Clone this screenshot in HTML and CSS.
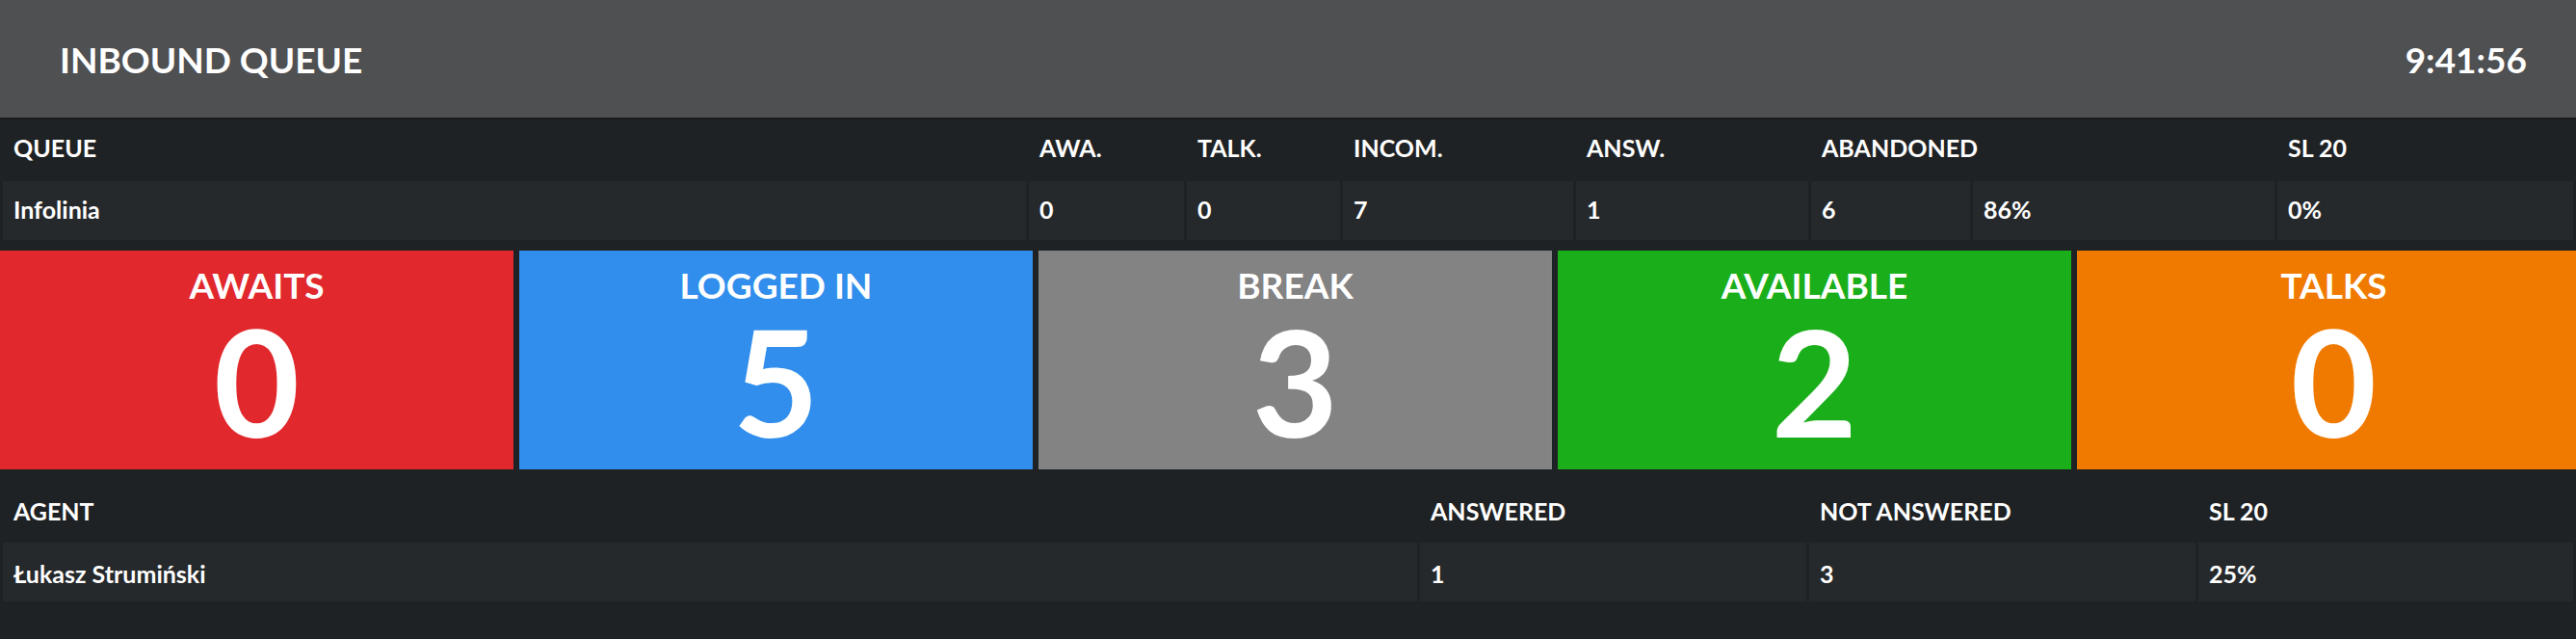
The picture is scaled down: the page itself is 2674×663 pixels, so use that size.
FILE: index.html
```html
<!DOCTYPE html>
<html lang="en">
<head>
    <meta charset="UTF-8">
    <meta name="viewport" content="width=device-width, initial-scale=1.0">
    <title>Inbound Queue</title>
    <link rel="stylesheet" href="styles.css">
</head>
<body>

    <header class="topbar">
        <h1>INBOUND QUEUE</h1>
        <span class="clock">9:41:56</span>
    </header>

    <table class="stats-table queue-table">
        <colgroup>
            <col class="q-name">
            <col class="q-awa">
            <col class="q-talk">
            <col class="q-incom">
            <col class="q-answ">
            <col class="q-aband">
            <col class="q-aband-pct">
            <col class="q-sl">
        </colgroup>
        <thead>
            <tr>
                <th>QUEUE</th>
                <th>AWA.</th>
                <th>TALK.</th>
                <th>INCOM.</th>
                <th>ANSW.</th>
                <th colspan="2">ABANDONED</th>
                <th>SL 20</th>
            </tr>
        </thead>
        <tbody>
            <tr>
                <td>Infolinia</td>
                <td>0</td>
                <td>0</td>
                <td>7</td>
                <td>1</td>
                <td>6</td>
                <td>86%</td>
                <td>0%</td>
            </tr>
        </tbody>
    </table>

    <section class="tiles">
        <div class="tile red">
            <div class="tile-label">AWAITS</div>
            <div class="tile-value">0</div>
        </div>
        <div class="tile blue">
            <div class="tile-label">LOGGED IN</div>
            <div class="tile-value">5</div>
        </div>
        <div class="tile gray">
            <div class="tile-label">BREAK</div>
            <div class="tile-value">3</div>
        </div>
        <div class="tile green">
            <div class="tile-label">AVAILABLE</div>
            <div class="tile-value">2</div>
        </div>
        <div class="tile orange">
            <div class="tile-label">TALKS</div>
            <div class="tile-value">0</div>
        </div>
    </section>

    <table class="stats-table agent-table">
        <colgroup>
            <col class="a-name">
            <col class="a-col">
            <col class="a-col">
            <col class="a-sl">
        </colgroup>
        <thead>
            <tr>
                <th>AGENT</th>
                <th>ANSWERED</th>
                <th>NOT ANSWERED</th>
                <th>SL 20</th>
            </tr>
        </thead>
        <tbody>
            <tr>
                <td>Łukasz Strumiński</td>
                <td>1</td>
                <td>3</td>
                <td>25%</td>
            </tr>
        </tbody>
    </table>

</body>
</html>
```

FILE: styles.css
```css
body {
    margin: 0;
    background-color: #1f2224;
    color: white;
    font-family: Lato, "Open Sans", sans-serif;
    font-weight: bold;
    overflow-x: hidden;
}

.topbar {
    height: 122px;
    display: flex;
    align-items: center;
    justify-content: space-between;
    padding: 0 51px 0 62px;
    background-color: #4f5052;
    box-shadow: 0 1px 2px rgba(0, 0, 0, 0.4);
}

.topbar h1 {
    margin: 0;
    font-size: 37px;
    font-weight: bold;
}

.clock {
    font-size: 37px;
}

.stats-table {
    width: 100%;
    table-layout: fixed;
    border-collapse: separate;
    border-spacing: 3px 0;
    font-size: 25px;
    line-height: 30px;
}

.stats-table th {
    text-align: left;
    font-weight: bold;
    padding: 16px 11px 20px;
}

.stats-table td {
    background-color: #26292b;
    padding: 14px 11px 17px;
}

.q-name { width: 1062px; }
.q-awa { width: 161px; }
.q-talk { width: 159px; }
.q-incom { width: 239px; }
.q-answ { width: 241px; }
.q-aband { width: 165px; }
.q-aband-pct { width: 313px; }
.q-sl { width: 307px; }

.tiles {
    display: grid;
    grid-template-columns: repeat(5, 533px);
    gap: 6px;
    margin-top: 11px;
    overflow: hidden;
}

.tile {
    height: 227px;
    box-sizing: border-box;
    padding-top: 16px;
    text-align: center;
}

.tile-label {
    font-size: 37px;
    line-height: 40px;
}

.tile-value {
    font-size: 154px;
    line-height: 157px;
}

.red { background-color: #e1282d; }
.blue { background-color: #318eec; }
.gray { background-color: #838383; }
.green { background-color: #1bae1b; }
.orange { background-color: #f07a00; }

.agent-table {
    margin-top: 10px;
}

.agent-table th {
    padding: 18px 11px 18px;
}

.agent-table td {
    padding: 17px 11px 14px;
}

.a-name { width: 1468px; }
.a-col { width: 401px; }
.a-sl { width: 389px; }
```
